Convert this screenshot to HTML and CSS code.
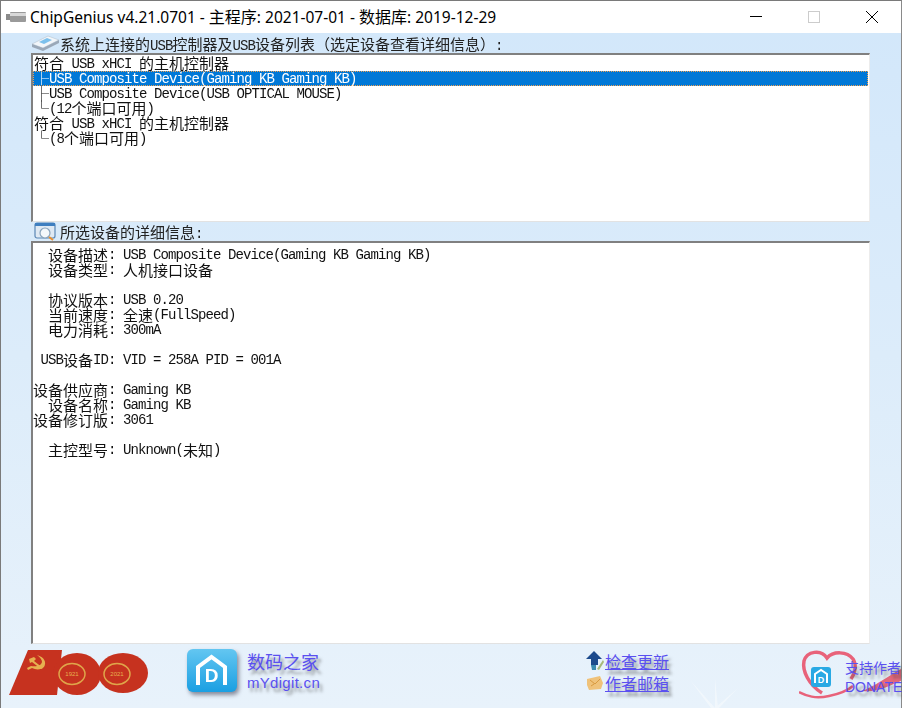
FILE: index.html
```html
<!DOCTYPE html>
<html lang="zh-CN">
<head>
    <meta charset="UTF-8">
    <meta name="viewport" content="width=device-width, initial-scale=1.0">
    <title>ChipGenius</title>
    <link rel="stylesheet" href="styles.css">
</head>
<body>
    <div class="window">
        <div class="titlebar">
            <svg class="app-icon" width="20" height="10" viewBox="0 0 20 10">
                <rect x="0" y="2" width="5" height="6" fill="#8a8a8a"></rect>
                <rect x="4" y="0" width="16" height="10" rx="1" fill="#9a9a9a"></rect>
                <rect x="4" y="1" width="16" height="3" fill="#d8d8d8"></rect>
            </svg>
            <div class="title-text">ChipGenius v4.21.0701 - <span class="title-cn">主程序</span>: 2021-07-01 - <span class="title-cn">数据库</span>: 2019-12-29</div>
            <div class="win-buttons">
                <svg width="12" height="12" viewBox="0 0 12 12"><line x1="0" y1="5.5" x2="12" y2="5.5" stroke="#000"></line></svg>
                <svg width="12" height="12" viewBox="0 0 12 12"><rect x="0.5" y="0.5" width="11" height="11" fill="none" stroke="#ccc"></rect></svg>
                <svg width="12" height="12" viewBox="0 0 12 12"><path d="M0 0L12 12M12 0L0 12" stroke="#000" fill="none"></path></svg>
            </div>
        </div>

        <div class="client">
            <div class="section-head">
                <svg class="head-icon" width="29" height="16" viewBox="0 0 29 16">
                    <path d="M1 9L17 1L28 5L12 13Z" fill="#f2f6fa" stroke="#b4c2d0" stroke-width="0.6"></path>
                    <path d="M1 9L12 13L28 5L28 8L12 16L1 12Z" fill="#9aa8b8"></path>
                    <path d="M8 7L16 3L21 5L13 9Z" fill="#7cc0ec"></path>
                </svg>
                <span class="head-text">系统上连接的<span class="mono">USB</span>控制器及<span class="mono">USB</span>设备列表（选定设备查看详细信息）<span class="mono">:</span></span>
            </div>
            <div class="box box-list">
                <div class="row"><span class="cn">符合</span> USB xHCI <span class="cn">的主机控制器</span></div>
                <div class="row selected"><span class="cn">├</span>USB Composite Device(Gaming KB Gaming KB)</div>
                <div class="row"><span class="cn">├</span>USB Composite Device(USB OPTICAL MOUSE)</div>
                <div class="row"><span class="cn">└</span>(12<span class="cn">个端口可用</span>)</div>
                <div class="row"><span class="cn">符合</span> USB xHCI <span class="cn">的主机控制器</span></div>
                <div class="row"><span class="cn">└</span>(8<span class="cn">个端口可用</span>)</div>
            </div>

            <div class="section-head section-head-2">
                <svg class="head-icon" width="29" height="19" viewBox="0 0 29 19">
                    <rect x="4" y="1" width="20" height="15" rx="2" fill="#dfe9f3" stroke="#5b87b5" stroke-width="1.2"></rect>
                    <rect x="4" y="1" width="20" height="3" fill="#3f7fc0"></rect>
                    <circle cx="14" cy="11" r="5" fill="#f4f8fb" stroke="#8aa4bc" stroke-width="1.2"></circle>
                    <line x1="18" y1="15" x2="22" y2="18" stroke="#e89030" stroke-width="2"></line>
                </svg>
                <span class="head-text">所选设备的详细信息<span class="mono">:</span></span>
            </div>
            <div class="box box-detail">
                <div class="info"><span class="cn">设备描述</span>:</div><div>USB Composite Device(Gaming KB Gaming KB)</div>
                <div class="info"><span class="cn">设备类型</span>:</div><div><span class="cn">人机接口设备</span></div>
                <div class="gap"></div>
                <div class="info"><span class="cn">协议版本</span>:</div><div>USB 0.20</div>
                <div class="info"><span class="cn">当前速度</span>:</div><div><span class="cn">全速</span>(FullSpeed)</div>
                <div class="info"><span class="cn">电力消耗</span>:</div><div>300mA</div>
                <div class="gap"></div>
                <div class="info">USB<span class="cn">设备</span>ID:</div><div>VID = 258A PID = 001A</div>
                <div class="gap"></div>
                <div class="info"><span class="cn">设备供应商</span>:</div><div>Gaming KB</div>
                <div class="info"><span class="cn">设备名称</span>:</div><div>Gaming KB</div>
                <div class="info"><span class="cn">设备修订版</span>:</div><div>3061</div>
                <div class="gap"></div>
                <div class="info"><span class="cn">主控型号</span>:</div><div>Unknown(<span class="cn">未知</span>)</div>
            </div>
        </div>

        <div class="footer">
            <svg class="rays" width="70" height="40" viewBox="0 0 70 40">
                <path d="M35 40L10 12L31 40ZM35 40L35 10L38 40ZM35 40L58 20L39 40Z" fill="#fff" opacity="0.4"></path>
            </svg>
            <svg class="logo-100" width="142" height="46" viewBox="0 0 142 46">
                <path d="M20 0H54L49 45H1Z" fill="#c6321f"></path>
                <ellipse cx="69" cy="24" rx="24" ry="21" fill="#c6321f"></ellipse>
                <ellipse cx="115" cy="23" rx="25" ry="20" fill="#c6321f"></ellipse>
                <ellipse cx="64" cy="24" rx="13" ry="10.5" fill="none" stroke="#dfa54a" stroke-width="1.5"></ellipse>
                <ellipse cx="109" cy="24" rx="13" ry="10.5" fill="none" stroke="#dfa54a" stroke-width="1.5"></ellipse>
                <text x="64" y="26" class="ring-year">1921</text>
                <text x="109" y="26" class="ring-year">2021</text>
                <path d="M29 5C36 7 39 12 36 17C33 20 28 20 24 18L20 20L19 18L23 16C28 17 33 16 34 12C34 10 32 7 29 5Z" fill="#e6b050"></path>
                <path d="M21 9L26 7L28 9L26 11L35 18L33 19L24 12L22 13Z" fill="#e6b050"></path>
            </svg>
            <div class="site">
                <svg class="site-icon" width="50" height="44" viewBox="0 0 50 44">
                    <defs>
                        <linearGradient id="siteBlue" x1="0" y1="0" x2="0" y2="1">
                            <stop offset="0" stop-color="#63c6f1"></stop>
                            <stop offset="1" stop-color="#1b9fe2"></stop>
                        </linearGradient>
                    </defs>
                    <rect x="0" y="0" width="50" height="43" rx="6" fill="url(#siteBlue)"></rect>
                    <path d="M11 36V18L24.5 8L38 18V36" fill="none" stroke="#fff" stroke-width="4"></path>
                    <text x="24.5" y="33" class="site-d">D</text>
                </svg>
                <div class="site-text">
                    <a class="link site-name">数码之家</a>
                    <a class="link site-url">mYdigit.cn</a>
                </div>
            </div>
            <div class="links">
                <div class="link-row">
                    <svg width="18" height="20" viewBox="0 0 18 20">
                        <path d="M8 0L16 8H12V14H5V8H0Z" fill="#1c4a8c"></path>
                        <path d="M5 14H10V19H6Z" fill="#3a8ab0"></path>
                        <path d="M11 18L17 9L18 11L13 19Z" fill="#a8b878"></path>
                    </svg>
                    <a class="link link-under">检查更新</a>
                </div>
                <div class="link-row">
                    <svg width="18" height="16" viewBox="0 0 18 16"><path d="M1 4L14 1L17 8L15 14L3 15L1 10Z" fill="#efc27a"></path><path d="M4 5L9 9L14 4M5 11L8 9" stroke="#d89a40" fill="none"></path></svg>
                    <a class="link link-under">作者邮箱</a>
                </div>
            </div>
            <div class="donate">
                <svg class="heart" width="102" height="50" viewBox="0 0 102 50">
                    <path d="M63 42C74 38 88 28 102 20V32C92 36 78 44 63 42Z" fill="#e4697c"></path>
                    <path d="M23 44C10 36 3 22 5 12C8 2 22 0 28 9C34 2 48 2 54 10C58 16 56 24 52 30" fill="none" stroke="#e8627a" stroke-width="3.5"></path>
                    <path d="M0 43C8 47 16 50 30 47C40 45 48 42 54 37" fill="none" stroke="#e8627a" stroke-width="2.5"></path>
                    <rect x="12" y="18" width="20" height="20" rx="3" fill="#29a9e4"></rect>
                    <path d="M16 34V25L22 21L28 25V34" fill="none" stroke="#fff" stroke-width="2"></path>
                    <text x="22" y="33.5" class="heart-d">D</text>
                </svg>
                <div class="donate-text">
                    <a class="link donate-cn">支持作者</a>
                    <a class="link donate-en">DONATE</a>
                </div>
            </div>
        </div>
    </div>
</body>
</html>
```

FILE: styles.css
```css
* {
    margin: 0;
    padding: 0;
    box-sizing: border-box;
}

body {
    width: 902px;
    height: 708px;
    overflow: hidden;
    background: #e4f0fa;
}

.window {
    height: 708px;
    display: flex;
    flex-direction: column;
    border-top: 1px solid #7a7a7a;
    border-left: 1px solid #7a7a7a;
    border-right: 1px solid #8a8a8a;
    background: linear-gradient(180deg, #d2e7fa 0%, #dcecfa 50%, #e8f2fb 100%);
}

.titlebar {
    height: 32px;
    flex-shrink: 0;
    display: flex;
    align-items: center;
    background: #ffffff;
    padding-left: 5px;
}

.app-icon {
    margin-right: 4px;
}

.title-text {
    flex: 1;
    font-family: "Noto Sans", "Noto Sans CJK SC", sans-serif;
    font-size: 15.5px;
    line-height: 20px;
    padding-bottom: 2px;
    color: #000;
}

.title-cn {
    font-family: "Noto Sans CJK SC", sans-serif;
    font-size: 16px;
}

.win-buttons {
    display: flex;
    align-items: center;
    gap: 46px;
    padding-right: 23px;
}

.client {
    padding: 0 31px 0 30px;
    flex-shrink: 0;
}

.section-head {
    height: 20px;
    display: flex;
    align-items: center;
    font-family: "Noto Sans CJK SC", sans-serif;
    font-size: 15px;
    color: #222;
}

.section-head-2 {
    height: 19px;
}

.head-icon {
    flex-shrink: 0;
    width: 29px;
}

.head-text {
    filter: blur(0.3px);
}

.mono {
    font-family: "Liberation Mono", monospace;
    font-size: 14px;
    letter-spacing: -0.9px;
}

.box {
    background: #ffffff;
    border-top: 2px solid #808080;
    border-left: 2px solid #808080;
    border-right: 1px solid #ececec;
    border-bottom: 1px solid #e2e2e2;
    font-family: "Liberation Mono", "Noto Sans CJK SC", monospace;
    font-size: 14px;
    letter-spacing: -0.9px;
    line-height: 15px;
    color: #111;
}

.cn {
    display: inline-block;
    height: 15px;
    vertical-align: top;
    font-family: "Noto Sans CJK SC", sans-serif;
    font-size: 15px;
    letter-spacing: 0;
    line-height: 14px;
}

.box-list {
    height: 169px;
    padding-top: 1px;
}

.row {
    height: 15px;
    padding-left: 1px;
    line-height: 16px;
    white-space: pre;
    filter: blur(0.3px);
}

.row.selected {
    background: #0078d7;
    color: #fff;
    outline: 1px dotted #f0a050;
    outline-offset: -1px;
    margin-right: 1px;
}

.box-detail {
    height: 403px;
    padding-top: 5px;
    display: grid;
    grid-template-columns: 90px 1fr;
    grid-auto-rows: 15px;
    white-space: pre;
}

.box-detail > div {
    filter: blur(0.3px);
}

.info {
    text-align: right;
    padding-right: 7.5px;
}

.gap {
    grid-column: 1 / -1;
}

.footer {
    flex: 1;
    display: flex;
    align-items: flex-start;
    padding-left: 7px;
    position: relative;
}

.rays {
    position: absolute;
    left: 679px;
    bottom: 0;
}

.logo-100 {
    margin-top: 6px;
    flex-shrink: 0;
}

.ring-year {
    font-family: "Liberation Sans", sans-serif;
    font-size: 6px;
    fill: #e6b050;
    text-anchor: middle;
}

.site {
    display: flex;
    margin-left: 37px;
    margin-top: 5px;
    width: 398px;
}

.site-icon {
    flex-shrink: 0;
    filter: drop-shadow(2px 3px 2px rgba(70, 70, 90, 0.6));
}

.site-d {
    font-family: "Liberation Sans", sans-serif;
    font-weight: 700;
    font-size: 19px;
    fill: #fff;
    text-anchor: middle;
}

.heart-d {
    font-family: "Liberation Sans", sans-serif;
    font-weight: 700;
    font-size: 9px;
    fill: #fff;
    text-anchor: middle;
}

.site-text {
    display: flex;
    flex-direction: column;
    margin-left: 10px;
}

.link {
    color: #5a50f0;
    text-shadow: 3px 4px 3px rgba(60, 60, 60, 0.5);
}

.site-name {
    font-family: "Noto Sans CJK SC", sans-serif;
    font-size: 18px;
    line-height: 24px;
}

.site-url {
    font-family: "Liberation Sans", sans-serif;
    font-size: 15px;
    line-height: 20px;
    letter-spacing: 0.3px;
}

.links {
    width: 214px;
    margin-top: 7px;
    display: flex;
    flex-direction: column;
    gap: 2px;
    flex-shrink: 0;
}

.link-row {
    display: flex;
    align-items: center;
    height: 20px;
    gap: 1px;
    margin-left: 1px;
}

.link-under {
    font-family: "Noto Sans CJK SC", sans-serif;
    font-size: 16px;
    text-decoration: underline;
}

.donate {
    display: flex;
    flex-shrink: 0;
    margin-top: 5px;
    position: relative;
}

.heart {
    flex-shrink: 0;
}

.donate-text {
    position: absolute;
    left: 46px;
    top: 8px;
    display: flex;
    flex-direction: column;
    white-space: nowrap;
}

.donate-cn {
    font-family: "Noto Sans CJK SC", sans-serif;
    font-size: 14px;
    line-height: 20px;
}

.donate-en {
    font-family: "Liberation Sans", sans-serif;
    font-size: 14px;
    line-height: 20px;
}
```
